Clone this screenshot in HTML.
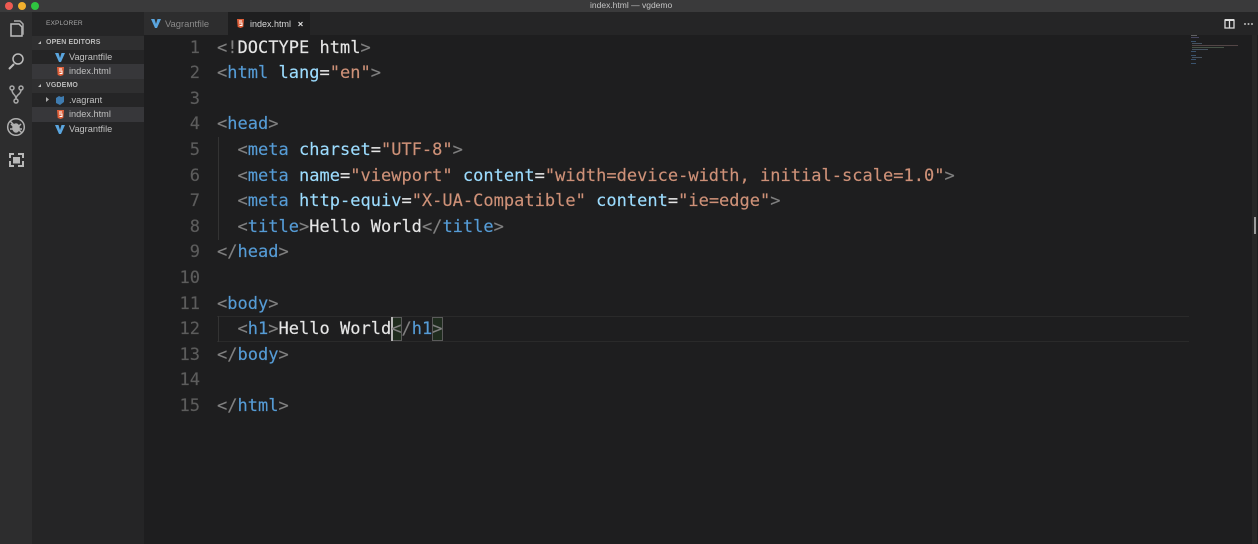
<!DOCTYPE html>
<html lang="en"><head><meta charset="utf-8"><title>index.html — vgdemo</title>
<style>
*{box-sizing:border-box}
html,body{margin:0;padding:0;width:1258px;height:544px;overflow:hidden;background:#1e1e1f}
body{position:relative;font-family:"Liberation Sans",sans-serif}
#r{position:absolute;left:0;top:0;width:1258px;height:544px;overflow:hidden;filter:blur(.35px)}
.a{position:absolute}
.t{position:absolute;white-space:pre}
.ln{position:absolute;width:30px;left:170px;text-align:right;font:17px/26px "DejaVu Sans Mono",monospace;color:#5c5c5c;letter-spacing:.01px;-webkit-text-stroke:.15px}
.c{position:absolute;left:217px;white-space:pre;font:17px/26px "DejaVu Sans Mono",monospace;color:#d4d4d4;letter-spacing:.01px;-webkit-text-stroke:.15px}
.p{color:#808080}.g{color:#569cd6}.v{color:#9cdcfe}.s{color:#ce9178}.w{color:#e6e6e6}
.side{font-size:9.2px;color:#c0c0c0}
.hd{font-size:7px;font-weight:bold;color:#bbb;letter-spacing:.15px}
</style></head><body><div id="r">
<!-- title bar -->
<div class="a" style="left:0;top:0;width:1258px;height:12px;background:#3a3a3b"></div>
<div class="a" style="left:5px;top:2px;width:8px;height:8px;border-radius:50%;background:#ee5a52"></div>
<div class="a" style="left:18px;top:2px;width:8px;height:8px;border-radius:50%;background:#f2b02e"></div>
<div class="a" style="left:31px;top:2px;width:8px;height:8px;border-radius:50%;background:#2fc440"></div>
<div class="t" style="left:590px;top:0;font-size:8.5px;line-height:11px;color:#c4c4c4">index.html — vgdemo</div>
<!-- activity bar -->
<div class="a" style="left:0;top:12px;width:32px;height:532px;background:#2d2d2e"></div>
<svg class="a" style="left:0;top:12px" width="32" height="170" viewBox="0 0 32 170" fill="none" stroke="#bdbdbd" stroke-width="1.5">
<path d="M11 12h8l3 3v9H11z"/><path d="M14 9h6l3 3v10h-1" stroke="#aaa"/>
<circle cx="18" cy="47" r="5"/><path d="M14 52l-5 5" stroke-width="2"/>
<g stroke="#a8a8a8"><circle cx="12" cy="76" r="2"/><circle cx="21" cy="76" r="2"/><circle cx="16" cy="89" r="2"/><path d="M12 78c0 5 4 4 4 9M21 78c0 5-5 4-5 9"/></g>
<g stroke="#b0b0b0"><circle cx="16" cy="115" r="8.300"/><path d="M10 109l12 12"/><ellipse cx="16" cy="116" rx="3" ry="4" fill="#b0b0b0"/><path d="M11 112l2 2M21 112l-2 2M10 117h3M22 117h-3"/></g>
<g stroke="#b8b8b8" stroke-width="2"><path d="M10 146v-4h4M18 142h5v4M23 149v5h-5M14 154h-4v-5"/><rect x="13.500" y="145.500" width="6" height="5.500" fill="#b8b8b8" stroke-width="1"/></g>
</svg>
<!-- sidebar -->
<div class="a" style="left:32px;top:12px;width:112px;height:532px;background:#252526"></div>
<div class="t" style="left:46px;top:19px;font-size:6.6px;line-height:10px;color:#a5a5a5;letter-spacing:.1px">EXPLORER</div>
<div class="a" style="left:32px;top:36px;width:112px;height:14px;background:#2f2f30"></div>
<div class="a" style="left:32px;top:79px;width:112px;height:14px;background:#2f2f30"></div>
<div class="a" style="left:32px;top:64px;width:112px;height:15px;background:#37373a"></div>
<div class="a" style="left:32px;top:107px;width:112px;height:15px;background:#37373a"></div>
<div class="t hd" style="left:46px;top:38px;line-height:10px">OPEN EDITORS</div>
<div class="t hd" style="left:46px;top:81px;line-height:10px">VGDEMO</div>
<svg class="a" style="left:32px;top:36px" width="20" height="100" fill="#bbb"><path d="M6 8l3-3v3zM6 51l3-3v3z"/><path d="M14 61l3 2.500-3 2.500z" fill="#aaa"/></svg>
<div class="t side" style="left:69px;top:52px;line-height:11px">Vagrantfile</div>
<div class="t side" style="left:69px;top:66px;line-height:11px">index.html</div>
<div class="t side" style="left:69px;top:95px;line-height:11px">.vagrant</div>
<div class="t side" style="left:69px;top:109px;line-height:11px">index.html</div>
<div class="t side" style="left:69px;top:124px;line-height:11px">Vagrantfile</div>
<!-- file icons -->
<svg class="a" style="left:0;top:0" width="320" height="140">
<path d="M55 53h3.500l1.500 5 1.500-5h3.500l-4 9h-2z" fill="#5aa5de"/>
<path d="M55 125h3.500l1.500 5 1.500-5h3.500l-4 9h-2z" fill="#5aa5de"/>
<path d="M57 67h7l-.7 8-2.800 1-2.800-1z" fill="#e0603a"/><path d="M59 69h3M59 71h3v2.500h-2.500" stroke="#fff" stroke-width=".9" fill="none"/>
<path d="M57 110h7l-.7 8-2.800 1-2.800-1z" fill="#e0603a"/><path d="M59 112h3M59 114h3v2.500h-2.500" stroke="#fff" stroke-width=".9" fill="none"/>
<path d="M56 98l3-2 2 1 3-1v6l-4 3-4-2z" fill="#3f7cb0"/>
</svg>
<!-- tab bar -->
<div class="a" style="left:144px;top:12px;width:1114px;height:23px;background:#252526"></div>
<div class="a" style="left:144px;top:12px;width:84px;height:23px;background:#2d2d2e"></div>
<div class="a" style="left:228px;top:12px;width:82px;height:23px;background:#1e1e1f"></div>
<svg class="a" style="left:0;top:0" width="320" height="40"><path d="M151 19h3.500l1.500 5 1.500-5h3.500l-4 9h-2z" fill="#5aa5de"/><path d="M237 19h7l-.7 8-2.800 1-2.800-1z" fill="#e0603a"/><path d="M239 21h3M239 23h3v2.500h-2.500" stroke="#fff" stroke-width=".9" fill="none"/><path d="M298.500 22l4 4M302.500 22l-4 4" stroke="#ddd" stroke-width="1.200"/></svg>
<div class="t" style="left:165px;top:18px;font-size:9.400px;line-height:12px;color:#8a8a8a">Vagrantfile</div>
<div class="t" style="left:250px;top:18px;font-size:9px;line-height:12px;color:#d8d8d8">index.html</div>
<svg class="a" style="left:1220px;top:16px" width="36" height="14"><path d="M5 4h9v8H5zM9.500 4v8" fill="none" stroke="#ddd" stroke-width="1.300"/><path d="M5 4h9" stroke="#ddd" stroke-width="2"/><circle cx="25" cy="8" r="1" fill="#bbb"/><circle cx="28.500" cy="8" r="1" fill="#bbb"/><circle cx="32" cy="8" r="1" fill="#bbb"/></svg>
<!-- current line -->
<div class="a" style="left:217px;top:316px;width:972px;height:26px;border-top:1px solid #2a2a2a;border-bottom:1px solid #2a2a2a"></div>
<!-- indent guides -->
<div class="a" style="left:218px;top:137px;width:1px;height:103px;background:#333"></div>
<div class="a" style="left:218px;top:316px;width:1px;height:26px;background:#333"></div>
<!-- bracket highlight -->
<div class="a" style="left:391px;top:317px;width:11px;height:24px;background:#1f2c1e;border:1px solid #5a5a5a"></div>
<div class="a" style="left:432px;top:317px;width:11px;height:24px;background:#1f2c1e;border:1px solid #5a5a5a"></div>
<div class="a" style="left:391px;top:317px;width:2px;height:24px;background:#b8b8b8"></div>
<!-- line numbers -->
<div class="ln" style="top:35px">1</div><div class="ln" style="top:60px">2</div><div class="ln" style="top:86px">3</div><div class="ln" style="top:111px">4</div><div class="ln" style="top:137px">5</div><div class="ln" style="top:163px">6</div><div class="ln" style="top:188px">7</div><div class="ln" style="top:214px">8</div><div class="ln" style="top:239px">9</div><div class="ln" style="top:265px">10</div><div class="ln" style="top:291px">11</div><div class="ln" style="top:316px">12</div><div class="ln" style="top:342px">13</div><div class="ln" style="top:367px">14</div><div class="ln" style="top:393px">15</div>
<!-- code -->
<div class="c" style="top:35px"><span class="p">&lt;!</span><span class="w">DOCTYPE html</span><span class="p">&gt;</span></div>
<div class="c" style="top:60px"><span class="p">&lt;</span><span class="g">html</span> <span class="v">lang</span><span class="w">=</span><span class="s">"en"</span><span class="p">&gt;</span></div>
<div class="c" style="top:111px"><span class="p">&lt;</span><span class="g">head</span><span class="p">&gt;</span></div>
<div class="c" style="top:137px">  <span class="p">&lt;</span><span class="g">meta</span> <span class="v">charset</span><span class="w">=</span><span class="s">"UTF-8"</span><span class="p">&gt;</span></div>
<div class="c" style="top:163px">  <span class="p">&lt;</span><span class="g">meta</span> <span class="v">name</span><span class="w">=</span><span class="s">"viewport"</span> <span class="v">content</span><span class="w">=</span><span class="s">"width=device-width, initial-scale=1.0"</span><span class="p">&gt;</span></div>
<div class="c" style="top:188px">  <span class="p">&lt;</span><span class="g">meta</span> <span class="v">http-equiv</span><span class="w">=</span><span class="s">"X-UA-Compatible"</span> <span class="v">content</span><span class="w">=</span><span class="s">"ie=edge"</span><span class="p">&gt;</span></div>
<div class="c" style="top:214px">  <span class="p">&lt;</span><span class="g">title</span><span class="p">&gt;</span><span class="w">Hello World</span><span class="p">&lt;/</span><span class="g">title</span><span class="p">&gt;</span></div>
<div class="c" style="top:239px"><span class="p">&lt;/</span><span class="g">head</span><span class="p">&gt;</span></div>
<div class="c" style="top:291px"><span class="p">&lt;</span><span class="g">body</span><span class="p">&gt;</span></div>
<div class="c" style="top:316px">  <span class="p">&lt;</span><span class="g">h1</span><span class="p">&gt;</span><span class="w">Hello World</span><span class="p">&lt;/</span><span class="g">h1</span><span class="p">&gt;</span></div>
<div class="c" style="top:342px"><span class="p">&lt;/</span><span class="g">body</span><span class="p">&gt;</span></div>
<div class="c" style="top:393px"><span class="p">&lt;/</span><span class="g">html</span><span class="p">&gt;</span></div>
<!-- minimap -->
<svg class="a" style="left:1189px;top:34px" width="63" height="30">
<g stroke-width="1" opacity=".75"><path d="M2 1.500h6" stroke="#777"/><path d="M2 3.500h8" stroke="#557"/><path d="M2 7.500h5" stroke="#468"/><path d="M3 9.500h10" stroke="#567"/><path d="M3 11.500h46" stroke="#655"/><path d="M3 13.500h32" stroke="#565"/><path d="M3 15.500h16" stroke="#567"/><path d="M2 17.500h5" stroke="#468"/><path d="M2 21.500h5" stroke="#468"/><path d="M3 23.500h10" stroke="#567"/><path d="M2 25.500h5" stroke="#468"/><path d="M2 29.500h5" stroke="#468"/></g></svg>
<!-- scrollbar -->
<div class="a" style="left:1252px;top:35px;width:5px;height:509px;background:#272727"></div>
<div class="a" style="left:1254px;top:217px;width:2px;height:17px;background:#9a9a9a"></div>
</div></body></html>
